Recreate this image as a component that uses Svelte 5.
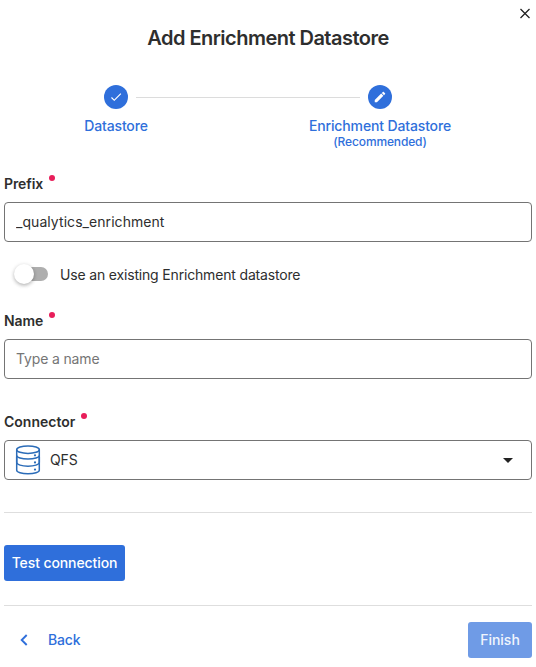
<script>
  let prefix = $state('_qualytics_enrichment');
  let name = $state('');
  let existing = $state(false);
</script>

<main class="dialog">
  <header>
    <button class="close" aria-label="Close">
      <svg width="12" height="12" viewBox="0 0 12 12"><path d="M1.5 1l9 9M10.5 1l-9 9" stroke="#222" stroke-width="1.3" fill="none" /></svg>
    </button>
    <h1>Add Enrichment Datastore</h1>
  </header>

  <section class="stepper">
    <div class="track">
      <span class="dot">
        <svg width="14" height="14" viewBox="0 0 24 24"><path d="M21 7L9 19l-5.5-5.5 1.41-1.41L9 16.17 19.59 5.59 21 7z" fill="#fff" /></svg>
      </span>
      <span class="line"></span>
      <span class="dot">
        <svg width="14" height="14" viewBox="0 0 24 24"><path d="M20.71 7.04c.39-.39.39-1.04 0-1.41l-2.34-2.34c-.37-.39-1.02-.39-1.41 0l-1.84 1.83 3.75 3.75M3 17.25V21h3.75L17.81 9.93l-3.75-3.75L3 17.25z" fill="#fff" /></svg>
      </span>
    </div>
    <div class="labels">
      <div class="step">Datastore</div>
      <div class="step">Enrichment Datastore<small>(Recommended)</small></div>
    </div>
  </section>

  <label class="title" for="prefix"><span>Prefix</span><i></i></label>
  <input id="prefix" class="field filled" bind:value={prefix} />

  <label class="switch">
    <input type="checkbox" bind:checked={existing} />
    <span class="rail"><span class="thumb"></span></span>
    <span class="caption">Use an existing Enrichment datastore</span>
  </label>

  <label class="title" for="name"><span>Name</span><i></i></label>
  <input id="name" class="field" placeholder="Type a name" bind:value={name} />

  <div class="title connector"><span>Connector</span><i></i></div>
  <div class="field select">
    <svg class="db" width="26" height="30" viewBox="0 0 26 30" fill="none" stroke="#2b6cb8" stroke-width="1.5">
      <ellipse cx="13" cy="4.7" rx="11.3" ry="3.7" />
      <path d="M1.7 4.7v5.8c0 2 5 3.6 11.3 3.6s11.3-1.6 11.3-3.6V4.7" />
      <path d="M1.7 12v5.6c0 2 5 3.6 11.3 3.6s11.3-1.6 11.3-3.6V12" />
      <path d="M1.7 19v6.2c0 2 5 3.6 11.3 3.6s11.3-1.6 11.3-3.6V19" />
      <path d="M1.7 10.5V19M24.3 10.5V19" />
      <g fill="#2b6cb8" stroke="none"><circle cx="20" cy="10.3" r="1.1" /><circle cx="20" cy="17.4" r="1.1" /><circle cx="20" cy="24.6" r="1.1" /></g>
    </svg>
    <span class="value">QFS</span>
    <svg class="caret" width="10" height="5" viewBox="0 0 10 5"><path d="M0 0h10L5 5z" fill="#222" /></svg>
  </div>

  <hr class="first" />
  <button class="primary test">Test connection</button>
  <hr class="second" />

  <footer>
    <button class="back">
      <svg width="8" height="12" viewBox="0 0 8 12"><path d="M6.7 1L1.7 6l5 5" stroke="#2f6fdb" stroke-width="1.9" fill="none" /></svg>
      <span>Back</span>
    </button>
    <button class="primary finish" disabled>Finish</button>
  </footer>
</main>

<style>
  :global(body) { background: #fff; }
  .dialog, .dialog * { box-sizing: border-box; }
  .dialog {
    width: 536px;
    height: 667px;
    padding: 0 4px;
    display: flex;
    flex-direction: column;
    font: 14px/20px Inter, "Liberation Sans", sans-serif;
    color: #2e2e2e;
    overflow: hidden;
  }
  button { font: inherit; border: 0; padding: 0; }
  header { display: flex; flex-direction: column; height: 85px; flex: none; }
  .close {
    align-self: flex-end;
    width: 14px;
    height: 14px;
    margin: 7px 0 0;
    background: none;
    display: grid;
    place-items: center;
  }
  h1 {
    margin: 3px 0 0;
    text-align: center;
    font-size: 20px;
    line-height: 28px;
    font-weight: 600;
    letter-spacing: -0.52px;
  }
  .stepper { height: 89px; flex: none; color: #2f6fdb; }
  .track { display: flex; align-items: center; padding-left: 100px; }
  .dot {
    width: 24px;
    height: 24px;
    border-radius: 50%;
    background: #2f6fdb;
    display: grid;
    place-items: center;
  }
  .line { width: 224px; height: 1px; margin: 0 8px; background: #dcdcdc; }
  .labels { display: flex; gap: 96px; padding: 7px 0 0 28px; }
  .step { width: 168px; text-align: center; font-weight: 500; letter-spacing: -0.14px; }
  .step small { display: block; font-size: 12px; line-height: 12px; }
  .title { display: flex; height: 20px; font-weight: 600; letter-spacing: -0.08px; flex: none; }
  .title i {
    width: 6px;
    height: 6px;
    margin: 1px 0 0 6px;
    border-radius: 50%;
    background: #e81e5a;
  }
  .field {
    width: 528px;
    height: 40px;
    flex: none;
    margin: 8px 0 0;
    padding: 0 11px 2px;
    border: 1px solid #747474;
    border-radius: 4px;
    background: #fff;
    font: inherit;
    letter-spacing: -0.15px;
    color: #2e2e2e;
    outline: 0;
  }
  .filled { letter-spacing: 0.06px; }
  .field::placeholder { color: #757575; opacity: 1; }
  .switch { display: flex; align-items: center; height: 20px; margin: 23px 0 26px; padding-left: 12px; flex: none; }
  .switch input { display: none; }
  .caption { letter-spacing: -0.17px; }
  .rail {
    position: relative;
    top: -1px;
    width: 32px;
    height: 14px;
    margin-right: 12px;
    border-radius: 7px;
    background: #aeaeae;
  }
  .thumb {
    position: absolute;
    left: -2px;
    top: -3px;
    width: 20px;
    height: 20px;
    border-radius: 50%;
    background: #fff;
    box-shadow: 0 2px 4px -1px #0003, 0 1px 4px #0003;
  }
  input:checked + .rail .thumb { left: 14px; }
  .connector { margin-top: 33px; letter-spacing: 0; }
  .select { display: flex; align-items: center; padding: 0 18px 0 10px; }
  .value { margin-left: 9px; flex: 1; }
  hr { width: 100%; height: 1px; border: 0; margin: 0; background: #dedede; flex: none; }
  .first { margin: 32px 0; }
  .primary { height: 36px; border-radius: 3px; background: #2f6fdb; color: #fff; font-weight: 500; flex: none; }
  .test { width: 121px; letter-spacing: -0.1px; }
  .second { margin: 24px 0 16px; }
  footer { display: flex; justify-content: space-between; }
  .back {
    display: flex;
    align-items: center;
    gap: 20px;
    height: 36px;
    padding-left: 16px;
    background: none;
    color: #2f6fdb;
    font-weight: 500;
    letter-spacing: -0.15px;
  }
  .finish { width: 64px; background: #6f9be6; color: #f0f5fd; }
</style>
